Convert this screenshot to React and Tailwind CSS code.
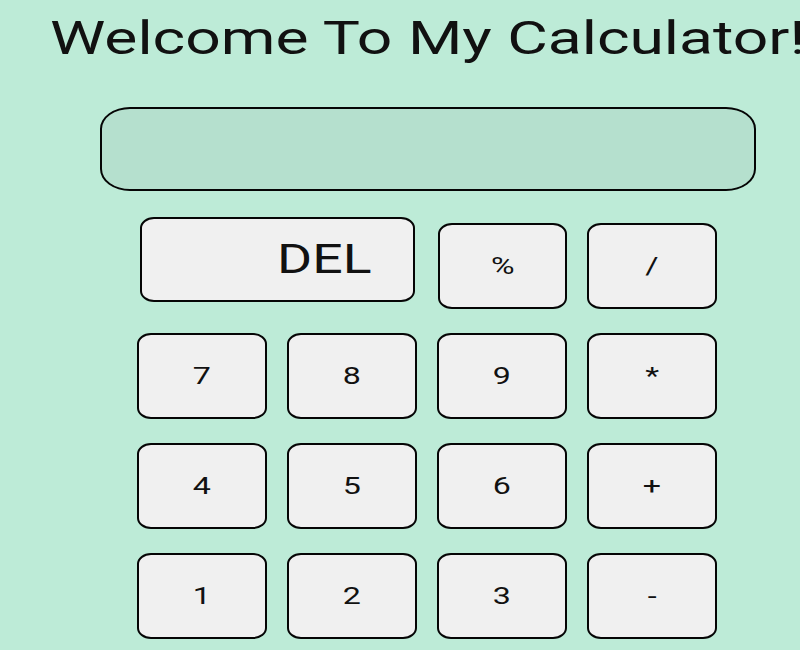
import { useState } from 'react';

const rows = [
  ['7', '8', '9', '*'],
  ['4', '5', '6', '+'],
  ['1', '2', '3', '-'],
];

function Key({ label, onPress, className = '' }) {
  return (
    <button
      onClick={() => onPress(label)}
      className={`h-[86px] w-[130px] rounded-[14px_/_11px] border-2 border-[#050505] bg-[#f0f0f0] text-[24px] text-[#111] ${className}`}
    >
      <span className="inline-block scale-x-[1.34]">{label}</span>
    </button>
  );
}

export default function App() {
  const [value, setValue] = useState('');

  const press = (key) => setValue((v) => v + key);

  return (
    <div className="min-h-screen overflow-hidden bg-[#bdebd7] font-['Roboto',sans-serif] text-[#111]">
      <h1 className="whitespace-nowrap pl-[50px] pt-[11px] text-[46px] font-normal leading-[54px]">
        <span className="inline-block origin-left scale-x-[1.355]">Welcome To My Calculator!</span>
      </h1>

      {/* display */}
      <div className="ml-[100px] mt-[42px] flex h-[84px] w-[656px] items-center justify-end rounded-[30px_/_22px] border-2 border-[#050505] bg-[#b5e0ce] px-8 text-[32px]">
        {value}
      </div>

      {/* keypad */}
      <div className="ml-[137px] mt-[26px] flex w-[580px] flex-col gap-[24px]">
        <div className="flex items-start">
          <button
            onClick={() => setValue((v) => v.slice(0, -1))}
            className="ml-[3px] mr-[23px] h-[85px] w-[275px] rounded-[14px_/_11px] border-2 border-[#050505] bg-[#f0f0f0] pl-[94px] text-[40px] text-[#111]"
          >
            <span className="inline-block scale-x-[1.34]">DEL</span>
          </button>
          <Key label="%" onPress={press} className="mt-[6px] w-[129px]" />
          <Key label="/" onPress={press} className="ml-[20px] mt-[6px] w-[129px]" />
        </div>

        {rows.map((row) => (
          <div key={row.join('')} className="grid grid-cols-[repeat(4,130px)] gap-x-[20px]">
            {row.map((k) => (
              <Key key={k} label={k} onPress={press} />
            ))}
          </div>
        ))}
      </div>
    </div>
  );
}
